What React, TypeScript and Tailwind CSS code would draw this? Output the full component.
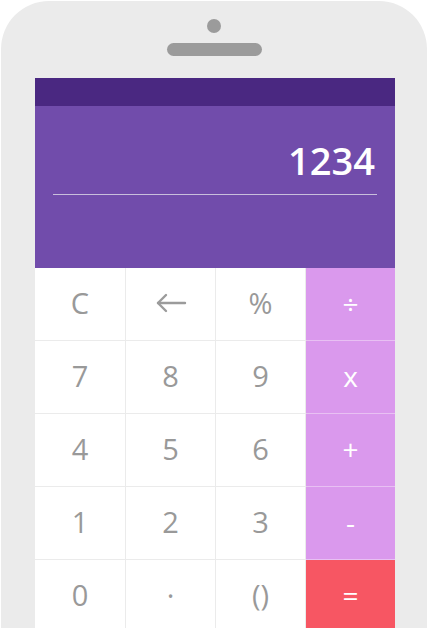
const keys = [
  ["C", "back", "%", "÷"],
  ["7", "8", "9", "x"],
  ["4", "5", "6", "+"],
  ["1", "2", "3", "-"],
  ["0", "·", "()", "="],
];

function BackArrow() {
  return (
    <svg width="32" height="20" viewBox="0 0 32 20" fill="none" stroke="#9b9b9b" strokeWidth="2.4" strokeLinecap="round" strokeLinejoin="round">
      <path d="M30 10H3" />
      <path d="M11 2L3 10l8 8" />
    </svg>
  );
}

export default function App() {
  return (
    <div className="w-[428px] h-[628px] bg-white overflow-hidden" style={{ fontFamily: '"Open Sans", sans-serif' }}>
      <div className="mx-[1px] mt-[1px] h-[640px] rounded-t-[48px] bg-[#ebebeb] flex flex-col items-center">
        <div className="mt-[18px] w-[14px] h-[14px] rounded-full bg-[#9b9b9b]" />
        <div className="mt-[10px] w-[95px] h-[13px] rounded-full bg-[#9b9b9b]" />
        <div className="mt-[22px] self-start ml-[34px] w-[360px] flex flex-col">
          <div className="h-[28px] bg-[#4a2881]" />
          <div className="h-[162px] bg-[#714cab] px-[18px] pt-[30px]">
            <div className="text-right text-white text-[38px] font-semibold leading-[48px] pr-[2px]">1234</div>
            <div className="mt-[10px] h-px bg-[#c9bfdc]" />
          </div>
          <div className="grid grid-cols-[91px_90px_90px_89px] bg-white">
            {keys.map((row, r) =>
              row.map((k, c) => {
                const op = c === 3;
                const eq = k === "=";
                return (
                  <div
                    key={r + "-" + c}
                    className={
                      "h-[73px] flex items-center justify-center border-b pb-[3px] " +
                      (op
                        ? eq
                          ? "bg-[#f75663] border-[#f75663] text-white text-[28px]"
                          : "bg-[#da99ed] border-[#e8c0f3] text-white text-[28px]"
                        : "border-r border-[#ebebeb] text-[#999999] text-[29px]")
                    }
                  >
                    {k === "back" ? <BackArrow /> : <span className="leading-none">{k}</span>}
                  </div>
                );
              })
            )}
          </div>
        </div>
      </div>
    </div>
  );
}
